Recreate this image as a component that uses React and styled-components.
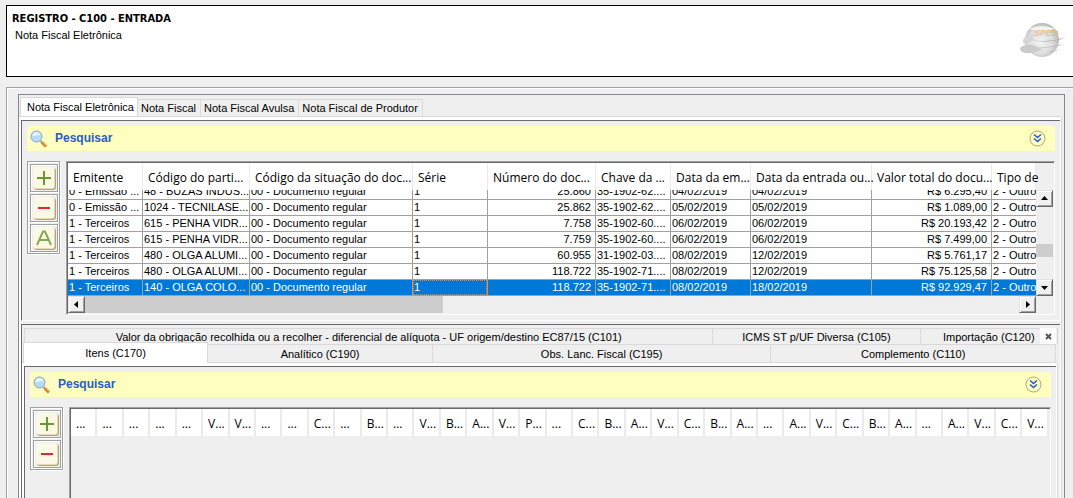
import styled, { createGlobalStyle, css } from "styled-components";

const GlobalStyle = createGlobalStyle`
  *, *::before, *::after {
    box-sizing: border-box;
  }
  body {
    margin: 0;
    overflow: hidden;
    background: #efefef;
    color: #000;
    font-family: "Liberation Sans", Arial, sans-serif;
    font-size: 11px;
    line-height: 15px;
  }
  button {
    font: inherit;
    color: inherit;
    margin: 0;
    padding: 0;
    border: 0;
    border-radius: 0;
    background: none;
  }
  svg {
    display: block;
  }
`;

const Page = styled.div`
  display: flex;
  flex-direction: column;
  gap: 10px;
  height: 100vh;
  padding: 5px 0 0 6px;
`;

const Header = styled.header`
  display: flex;
  justify-content: space-between;
  flex: none;
  height: 72px;
  padding: 4px 6px 0 5px;
  border: 1px solid #000;
  border-right: 0;
  background: #fff;
`;

const Title = styled.h1`
  margin: 0;
  font-family: "DejaVu Sans Condensed", "DejaVu Sans", sans-serif;
  font-size: 11px;
  font-weight: bold;
  line-height: 17px;
`;

const Subtitle = styled.p`
  margin: 0;
  padding-left: 3px;
  line-height: 16px;
`;

const Logo = styled.svg`
  margin-top: 11px;
`;

const Group = styled.div`
  display: flex;
  flex: 1;
  min-height: 0;
  padding: 6px 8px 0 11px;
  border-top: 1px solid #a0a0a0;
  border-left: 1px solid #a0a0a0;
  box-shadow: inset 1px 1px 0 #fff;
`;

const Frame = styled.div`
  display: flex;
  flex-direction: column;
  flex: 1;
  min-width: 0;
  padding-top: 2px;
  border: 1px solid #828790;
  border-bottom: 0;
`;

const TabStrip = styled.div`
  display: flex;
  align-items: flex-end;
  padding-left: 1px;
`;

const Tab = styled.button`
  height: 18px;
  padding: 0 4px 0 3px;
  border-top: 1px solid #d9d9d9;
  border-right: 1px solid #d9d9d9;
  white-space: nowrap;
  line-height: 15px;

  ${(props) =>
    props.$active &&
    css`
      height: 20px;
      padding: 0 3px 0 6px;
      border-left: 1px solid #d9d9d9;
      background: #fff;
    `}
`;

const TabPage = styled.div`
  display: flex;
  flex-direction: column;
  gap: 3px;
  flex: 1;
  min-height: 0;
  margin-right: 3px;
  border: solid #fff;
  border-width: 3px 1px 0 2px;
  box-shadow: 0 -1px 0 #d9d9d9, 1px 0 0 #d9d9d9;
`;

const Panel = styled.section`
  display: flex;
  flex-direction: column;
  flex: ${(props) => (props.$fill ? "1" : "none")};
  gap: 10px;
  min-height: 0;
  padding: ${(props) => (props.$fill ? "5px 5px 0" : "5px")};
  border-top: 1px solid #696969;
  border-left: 1px solid #696969;
  border-bottom: ${(props) => (props.$fill ? "0" : "1px")} solid #fff;
`;

const SearchBar = styled.div`
  display: flex;
  align-items: center;
  flex: none;
  gap: 7px;
  height: 25px;
  padding: 0 9px 0 3px;
  border-radius: 4px 4px 0 0;
  background: #ffffc0;
`;

const SearchLabel = styled.span`
  flex: 1;
  color: #2a5bc7;
  font-size: 12px;
  font-weight: bold;
`;

const PanelBody = styled.div`
  display: flex;
  flex: 1;
  gap: 6px;
  min-height: 0;
`;

const Toolbar = styled.div`
  display: flex;
  flex-direction: column;
  flex: none;
  align-self: flex-start;
  gap: 2px;
  padding: 2px 1px 1px 2px;
  border: 1px solid #a0a0a0;
  box-shadow: inset 1px 1px 0 #fff, 1px 1px 0 #fff;
`;

const ToolButton = styled.button`
  display: flex;
  align-items: center;
  justify-content: center;
  width: 28px;
  height: 28px;
  border: 1px solid #a0a0a0;
  box-shadow: inset 1px 1px 0 #fff, 1px 1px 0 #fff;
`;

const TableFrame = styled.div`
  display: grid;
  grid-template-columns: minmax(0, 1fr) auto;
  align-content: start;
  flex: 1;
  min-width: 0;
  padding: 1px;
  border: 1px solid #a0a0a0;
  border-right-color: #fff;
  border-bottom: ${(props) => (props.$open ? "0" : "1px")} solid #fff;
  box-shadow: inset 1px 1px 0 #696969;
`;

const Table = styled.table`
  width: 100%;
  table-layout: fixed;
  border-collapse: separate;
  border-spacing: 0;
`;

const HeadCell = styled.th`
  height: 27px;
  padding: 3px 0 0 5px;
  border-right: ${(props) => (props.$narrow ? "2px" : "1px")} solid #ebebeb;
  background: #fff;
  font-family: "Open Sans", "Noto Sans", sans-serif;
  font-size: 12px;
  font-weight: normal;
  line-height: 20px;
  text-align: left;
  white-space: nowrap;
`;

const Row = styled.tr`
  background: ${(props) => (props.$selected ? "#0078d7" : "#fff")};
  color: ${(props) => (props.$selected ? "#fff" : "#000")};
`;

const Cell = styled.td`
  padding: 0;
  border-right: 1px solid #a0a0a0;
  border-bottom: 1px solid #a0a0a0;

  &:last-child {
    border-right: 0;
  }
`;

const CellText = styled.div`
  display: flex;
  align-items: flex-end;
  justify-content: ${(props) => (props.$right ? "flex-end" : "flex-start")};
  height: ${(props) => (props.$clipped ? "9px" : "15px")};
  padding: 0 ${(props) => (props.$right ? "4px" : "0")} 0 1px;
  overflow: ${(props) => (props.$clipped ? "hidden" : "visible")};
  white-space: nowrap;
  outline: ${(props) => (props.$focused ? "1px dotted #d0905a" : "none")};
  outline-offset: -1px;
`;

const VerticalBar = styled.div`
  display: flex;
  flex-direction: column;
  width: 17px;
  margin-top: 27px;
  background: #efefef;
`;

const HorizontalBar = styled.div`
  display: flex;
  height: 17px;
`;

const Track = styled.div`
  display: flex;
  flex: 1;
  flex-direction: ${(props) => (props.$vertical ? "column" : "row")};
`;

const TrackSpace = styled.div`
  flex: ${(props) => props.$grow};
`;

const Thumb = styled.div`
  flex: ${(props) => props.$grow};
  background: #cdcdcd;
`;

const ArrowButton = styled.button`
  display: flex;
  align-items: center;
  justify-content: center;
  width: 17px;
  height: 17px;
  border: 1px solid;
  border-color: #e3e3e3 #696969 #696969 #e3e3e3;
  background: #f0f0f0;
  box-shadow: inset 1px 1px 0 #fff, inset -1px -1px 0 #a0a0a0;
`;

const DetailPanel = styled.section`
  display: flex;
  flex-direction: column;
  flex: 1;
  min-height: 0;
  padding-top: 3px;
  border-top: 1px solid #696969;
  border-left: 1px solid #696969;
`;

const DetailTabs = styled.div`
  display: flex;
  position: relative;
  height: ${(props) => (props.$front ? "19px" : "16px")};
  padding: ${(props) => (props.$front ? "0 4px 0 1px" : "0 2px")};
  line-height: ${(props) => (props.$front ? "15px" : "17px")};
`;

const DetailTab = styled.button`
  flex: ${(props) => props.$grow};
  min-width: 0;
  height: 100%;
  border-top: 1px solid #d9d9d9;
  border-right: 1px solid #d9d9d9;
  white-space: nowrap;

  &:first-child {
    border-left: 1px solid #d9d9d9;
  }

  ${(props) =>
    props.$active &&
    css`
      height: 21px;
      margin-top: -2px;
      background: #fff;
    `}
`;

/* floats over the right end of the back row of tabs */
const CloseButton = styled.button`
  position: absolute;
  top: 0;
  right: 4px;
  display: flex;
  align-items: center;
  justify-content: center;
  width: 16px;
  height: 16px;
  background: #fff;
`;

const DetailPage = styled.div`
  display: flex;
  flex: 1;
  min-height: 0;
  margin-right: 3px;
  border: solid #fff;
  border-width: 3px 1px 0 2px;
  box-shadow: 0 -1px 0 #d9d9d9, 1px 0 0 #d9d9d9;

  > section {
    min-width: 0;
  }
`;

const columns = [
  { label: "Emitente", width: 75 },
  { label: "Código do parti...", width: 107 },
  { label: "Código da situação do doc...", width: 163 },
  { label: "Série", width: 75 },
  { label: "Número do doc...", width: 108, right: true },
  { label: "Chave da ...", width: 75 },
  { label: "Data da em...", width: 80 },
  { label: "Data da entrada ou...", width: 121 },
  { label: "Valor total do docu...", width: 120, right: true },
  { label: "Tipo de" },
];

const regular = "00 - Documento regular";

const rows = [
  ["0 - Emissão ...", "48 - BUZAS INDUS...", regular, "1", "25.860", "35-1902-62....", "04/02/2019", "04/02/2019", "R$ 6.295,40", "2 - Outro"],
  ["0 - Emissão ...", "1024 - TECNILASE...", regular, "1", "25.862", "35-1902-62....", "05/02/2019", "05/02/2019", "R$ 1.089,00", "2 - Outro"],
  ["1 - Terceiros", "615 - PENHA VIDR...", regular, "1", "7.758", "35-1902-60....", "06/02/2019", "06/02/2019", "R$ 20.193,42", "2 - Outro"],
  ["1 - Terceiros", "615 - PENHA VIDR...", regular, "1", "7.759", "35-1902-60....", "06/02/2019", "06/02/2019", "R$ 7.499,00", "2 - Outro"],
  ["1 - Terceiros", "480 - OLGA ALUMI...", regular, "1", "60.955", "31-1902-03....", "08/02/2019", "12/02/2019", "R$ 5.761,17", "2 - Outro"],
  ["1 - Terceiros", "480 - OLGA ALUMI...", regular, "1", "118.722", "35-1902-71....", "08/02/2019", "12/02/2019", "R$ 75.125,58", "2 - Outro"],
  ["1 - Terceiros", "140 - OLGA COLO...", regular, "1", "118.722", "35-1902-71....", "08/02/2019", "18/02/2019", "R$ 92.929,47", "2 - Outro"],
];

const itemColumns = [
  "...", "...", "...", "...", "...", "V...", "V...", "...", "...", "C...",
  "...", "B...", "...", "V...", "B...", "A...", "V...", "P...", "...", "C...",
  "B...", "A...", "V...", "C...", "B...", "A...", "...", "A...", "V...", "C...",
  "B...", "A...", "...", "A...", "V...", "C...", "V...",
];

const glyphs = {
  add: <path d="M5 12h14M12 5v14" stroke="#6a9a2d" strokeWidth="2" />,
  remove: <path d="M6 12h12" stroke="#e8242c" strokeWidth="2" />,
  edit: (
    <path
      d="m5 19 6-13.500h2L19 19M8 14h8"
      stroke="#86a955"
      strokeWidth="2"
    />
  ),
};

const toolNames = { add: "Adicionar", remove: "Remover", edit: "Alterar" };

const arrows = {
  up: "M0 5h7L3.5 1z",
  down: "M0 2h7L3.5 6z",
  left: "M5 0v7L1 3.5z",
  right: "M2 0v7l4-3.5z",
};

function ToolIcon({ name }) {
  return (
    <svg width="24" height="24" viewBox="0 0 24 24" fill="none">
      <rect x="2" y="2" width="22" height="22" rx="3" fill="#b3a57a" />
      <rect x="1" y="1" width="22" height="22" rx="3" fill="#e2dbb8" />
      <rect x="1" y="1" width="21" height="21" rx="2" fill="#fbf9e6" />
      {glyphs[name]}
    </svg>
  );
}

function SearchIcon() {
  return (
    <svg width="18" height="18" viewBox="0 0 18 18">
      <path d="m10.500 11 2 2" stroke="#9a9a9a" strokeWidth="2" />
      <path d="m12 12.500 4 4" stroke="#d97a1e" strokeWidth="3" />
      <path d="m12.500 12.200 3.500 3.400" stroke="#ffc36b" strokeWidth="1" />
      <circle cx="6.500" cy="6.500" r="5.500" fill="#b5dcfb" stroke="#8ba0c4" />
      <path d="M2.500 6.500a4 4 0 0 1 8-1c-3-.5-5 .5-8 1z" fill="#e3f3ff" />
    </svg>
  );
}

function ExpandIcon() {
  return (
    <svg width="17" height="17" viewBox="0 0 17 17" fill="none">
      <circle cx="8.500" cy="8.500" r="7.500" stroke="#a9a678" />
      <path
        d="m5 4.500 3.500 3 3.500-3M5 8.500l3.500 3 3.500-3"
        stroke="#1d5ad0"
        strokeWidth="1.500"
      />
    </svg>
  );
}

function Search() {
  return (
    <SearchBar>
      <SearchIcon />
      <SearchLabel>Pesquisar</SearchLabel>
      <button type="button" aria-label="Expandir pesquisa">
        <ExpandIcon />
      </button>
    </SearchBar>
  );
}

function Tools({ names }) {
  return (
    <Toolbar>
      {names.map((name) => (
        <ToolButton key={name} type="button" aria-label={toolNames[name]}>
          <ToolIcon name={name} />
        </ToolButton>
      ))}
    </Toolbar>
  );
}

function Arrow({ direction, label }) {
  return (
    <ArrowButton type="button" aria-label={label}>
      <svg width="7" height="7" viewBox="0 0 7 7">
        <path d={arrows[direction]} />
      </svg>
    </ArrowButton>
  );
}

function CompanyLogo() {
  return (
    <Logo width="48" height="40" viewBox="0 0 48 40">
      <defs>
        <radialGradient id="ball" cx="45%" cy="55%" r="60%">
          <stop offset="0" stopColor="#f4f4f4" />
          <stop offset="0.6" stopColor="#dedede" />
          <stop offset="1" stopColor="#b0b0b0" />
        </radialGradient>
      </defs>
      <circle cx="23" cy="19" r="17" fill="url(#ball)" />
      <path d="M10 8q13-6 26 0-13 4-26 0z" fill="#f3f3f3" />
      <path d="M5 17q6-5 10-3-3 4 1 5-7 2-9 5-5-3-2-7z" fill="#d6d6d6" />
      <path d="M1 27q5-5 13-3 6 4 10 4-9 5-18 4-5-1-5-5z" fill="#cbcbcb" />
      <path d="M12 19q16 3 35-3-5 3-12 4-13 2-23-1z" fill="#b8b8b8" />
      <path d="M12 25q16 3 32-2-5 3-10 3-13 2-22-1z" fill="#bcbcbc" />
      <path d="M26 30q9 1 16-2-6 3-10 3z" fill="#b8b8b8" />
      <text
        x="15"
        y="15"
        fill="#e8b878"
        fontFamily="Liberation Sans, sans-serif"
        fontSize="9"
        fontStyle="italic"
      >
        SPED
      </text>
    </Logo>
  );
}

function InvoiceTable() {
  return (
    <TableFrame>
      <Table>
        <colgroup>
          {columns.map((column) => (
            <col key={column.label} width={column.width} />
          ))}
        </colgroup>
        <thead>
          <tr>
            {columns.map((column) => (
              <HeadCell key={column.label}>{column.label}</HeadCell>
            ))}
          </tr>
        </thead>
        <tbody>
          {rows.map((row, index) => {
            const selected = index === rows.length - 1;
            return (
              <Row key={index} $selected={selected}>
                {row.map((value, i) => (
                  <Cell key={i}>
                    <CellText
                      $right={columns[i].right}
                      $clipped={index === 0}
                      $focused={selected && i === 3}
                    >
                      {value}
                    </CellText>
                  </Cell>
                ))}
              </Row>
            );
          })}
        </tbody>
      </Table>
      <VerticalBar>
        <Arrow direction="up" label="Rolar para cima" />
        <Track $vertical>
          <TrackSpace $grow={37} />
          <Thumb $grow={13} />
          <TrackSpace $grow={22} />
        </Track>
        <Arrow direction="down" label="Rolar para baixo" />
      </VerticalBar>
      <HorizontalBar>
        <Arrow direction="left" label="Rolar para a esquerda" />
        <Track>
          <Thumb $grow={358} />
          <TrackSpace $grow={577} />
        </Track>
        <Arrow direction="right" label="Rolar para a direita" />
      </HorizontalBar>
    </TableFrame>
  );
}

function ItemsTable() {
  return (
    <TableFrame $open>
      <Table>
        <thead>
          <tr>
            {itemColumns.map((label, index) => (
              <HeadCell key={index} $narrow>
                {label}
              </HeadCell>
            ))}
          </tr>
        </thead>
      </Table>
    </TableFrame>
  );
}

function App() {
  return (
    <>
      <GlobalStyle />
      <Page>
        <Header>
          <div>
            <Title>REGISTRO - C100 - ENTRADA</Title>
            <Subtitle>Nota Fiscal Eletrônica</Subtitle>
          </div>
          <CompanyLogo />
        </Header>
        <Group>
          <Frame>
            <TabStrip role="tablist">
              <Tab role="tab" aria-selected="true" $active>
                Nota Fiscal Eletrônica
              </Tab>
              <Tab role="tab">Nota Fiscal</Tab>
              <Tab role="tab">Nota Fiscal Avulsa</Tab>
              <Tab role="tab">Nota Fiscal de Produtor</Tab>
            </TabStrip>
            <TabPage>
              <Panel>
                <Search />
                <PanelBody>
                  <Tools names={["add", "remove", "edit"]} />
                  <InvoiceTable />
                </PanelBody>
              </Panel>
              <DetailPanel>
                <DetailTabs role="tablist">
                  <DetailTab role="tab" $grow={690}>
                    Valor da obrigação recolhida ou a recolher - diferencial de
                    alíquota - UF origem/destino EC87/15 (C101)
                  </DetailTab>
                  <DetailTab role="tab" $grow={207}>
                    ICMS ST p/UF Diversa (C105)
                  </DetailTab>
                  <DetailTab role="tab" $grow={137}>
                    Importação (C120)
                  </DetailTab>
                  <CloseButton type="button" aria-label="Fechar">
                    <svg width="7" height="7" viewBox="0 0 7 7">
                      <path
                        d="m1 1 5 5M6 1 1 6"
                        stroke="#555"
                        strokeWidth="2"
                      />
                    </svg>
                  </CloseButton>
                </DetailTabs>
                <DetailTabs role="tablist" $front>
                  <DetailTab role="tab" aria-selected="true" $active $grow={184}>
                    Itens (C170)
                  </DetailTab>
                  <DetailTab role="tab" $grow={225}>
                    Analítico (C190)
                  </DetailTab>
                  <DetailTab role="tab" $grow={339}>
                    Obs. Lanc. Fiscal (C195)
                  </DetailTab>
                  <DetailTab role="tab" $grow={285}>
                    Complemento (C110)
                  </DetailTab>
                </DetailTabs>
                <DetailPage>
                  <Panel $fill>
                    <Search />
                    <PanelBody>
                      <Tools names={["add", "remove"]} />
                      <ItemsTable />
                    </PanelBody>
                  </Panel>
                </DetailPage>
              </DetailPanel>
            </TabPage>
          </Frame>
        </Group>
      </Page>
    </>
  );
}

export default App;
